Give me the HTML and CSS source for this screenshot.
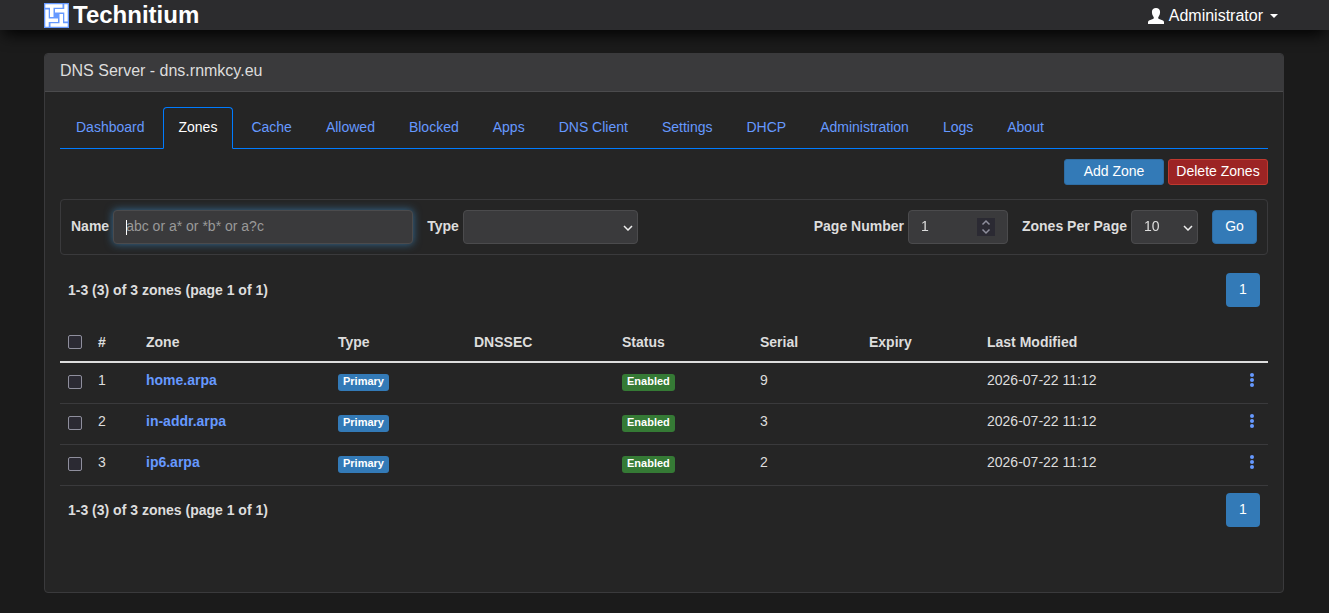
FILE: index.html
```html
<!DOCTYPE html>
<html lang="en">
<head>
  <meta charset="UTF-8" />
  <meta name="viewport" content="width=device-width, initial-scale=1.0"/>
  <title>Technitium DNS Server</title>
  <link rel="stylesheet" href="styles.css">
</head>
<body>
  <header class="header">
    <a class="brand" href="#">
      <svg class="logo" viewBox="0 0 25 25" aria-hidden="true">
        <rect width="25" height="25" fill="#6699ff"/>
        <g fill="#ffffff">
          <path d="M1.300 1.300h17.200v3.400h-9v9.300h-3.500v-9.300h-4.700z"/>
          <path d="M1.300 1.300h17.200v3.400h-9v9.300h-3.500v-9.300h-4.700z" transform="rotate(90 12.500 12.500)"/>
          <path d="M1.300 1.300h17.200v3.400h-9v9.300h-3.500v-9.300h-4.700z" transform="rotate(180 12.500 12.500)"/>
          <path d="M1.300 1.300h17.200v3.400h-9v9.300h-3.500v-9.300h-4.700z" transform="rotate(270 12.500 12.500)"/>
        </g>
      </svg>
      <span>Technitium</span>
    </a>
    <button class="user-menu" type="button">
      <svg class="user-icon" viewBox="0 0 16 16" aria-hidden="true">
        <path fill="currentColor" d="M8 0C5.600 0 3.900 1.500 3.900 4c0 1.600.400 2.900 1.100 3.900.600.900.900 1.500.800 2.100-.100.600-.600.900-1.600 1.300L1 12.600C.300 12.900 0 13.500 0 14.200V16h16v-1.800c0-.700-.300-1.300-1-1.600l-3.200-1.300c-1-.400-1.500-.700-1.600-1.300-.100-.600.200-1.200.800-2.100.700-1 1.100-2.300 1.100-3.900 0-2.500-1.700-4-4.100-4z"/>
      </svg>
      <span>Administrator</span>
      <span class="caret"></span>
    </button>
  </header>

  <main class="container">
    <section class="panel">
      <div class="panel-heading">DNS Server - dns.rnmkcy.eu</div>
      <div class="panel-body">
        <nav class="tabs">
          <a href="#">Dashboard</a>
          <a href="#" class="active">Zones</a>
          <a href="#">Cache</a>
          <a href="#">Allowed</a>
          <a href="#">Blocked</a>
          <a href="#">Apps</a>
          <a href="#">DNS Client</a>
          <a href="#">Settings</a>
          <a href="#">DHCP</a>
          <a href="#">Administration</a>
          <a href="#">Logs</a>
          <a href="#">About</a>
        </nav>

        <div class="actions">
          <button class="btn btn-primary btn-sm" type="button">Add Zone</button>
          <button class="btn btn-danger btn-sm" type="button">Delete Zones</button>
        </div>

        <form class="filter">
          <div class="field">
            <label for="txtName">Name</label>
            <div class="select name">
              <input class="control" id="txtName" type="text" placeholder="abc or a* or *b* or a?c" autofocus />
              <span class="cursor"></span>
            </div>
          </div>
          <div class="field">
            <label for="optType">Type</label>
            <div class="select type">
              <select class="control" id="optType"><option></option><option>Primary</option><option>Secondary</option></select>
              <svg class="chevron" viewBox="0 0 10 6" aria-hidden="true"><path d="M1 1l4 4 4-4"/></svg>
            </div>
          </div>
          <div class="field push">
            <label for="txtPage">Page Number</label>
            <div class="select page">
              <input class="control" id="txtPage" type="number" value="1" min="1" />
              <svg class="spinner" viewBox="0 0 18 18" aria-hidden="true"><path d="M5.500 6.500L9 3l3.500 3.500M5.500 11.500L9 15l3.500-3.500"/></svg>
            </div>
          </div>
          <div class="field">
            <label for="optPerPage">Zones Per Page</label>
            <div class="select per-page">
              <select class="control" id="optPerPage"><option>10</option><option>25</option><option>50</option></select>
              <svg class="chevron" viewBox="0 0 10 6" aria-hidden="true"><path d="M1 1l4 4 4-4"/></svg>
            </div>
          </div>
          <button class="btn btn-primary go" type="button">Go</button>
        </form>

        <div class="pager pager-top">
          <b>1-3 (3) of 3 zones (page 1 of 1)</b>
          <a class="page-link" href="#">1</a>
        </div>

        <table class="zones">
          <colgroup>
            <col class="c-check"><col class="c-num"><col class="c-zone"><col class="c-type"><col class="c-dnssec"><col class="c-status"><col class="c-serial"><col class="c-expiry"><col>
            <col class="c-menu">
          </colgroup>
          <thead>
            <tr>
              <th><input type="checkbox" aria-label="Select all zones" /></th>
              <th>#</th>
              <th>Zone</th>
              <th>Type</th>
              <th>DNSSEC</th>
              <th>Status</th>
              <th>Serial</th>
              <th>Expiry</th>
              <th>Last Modified</th>
              <th></th>
            </tr>
          </thead>
          <tbody>
            <tr>
              <td><input type="checkbox" aria-label="Select home.arpa" /></td>
              <td>1</td>
              <td><a href="#">home.arpa</a></td>
              <td><span class="label label-primary">Primary</span></td>
              <td></td>
              <td><span class="label label-success">Enabled</span></td>
              <td>9</td>
              <td></td>
              <td>2026-07-22 11:12</td>
              <td><button class="menu" type="button" aria-label="Options"><svg viewBox="0 0 4 14"><circle cx="2" cy="2" r="2"/><circle cx="2" cy="7" r="2"/><circle cx="2" cy="12" r="2"/></svg></button></td>
            </tr>
            <tr>
              <td><input type="checkbox" aria-label="Select in-addr.arpa" /></td>
              <td>2</td>
              <td><a href="#">in-addr.arpa</a></td>
              <td><span class="label label-primary">Primary</span></td>
              <td></td>
              <td><span class="label label-success">Enabled</span></td>
              <td>3</td>
              <td></td>
              <td>2026-07-22 11:12</td>
              <td><button class="menu" type="button" aria-label="Options"><svg viewBox="0 0 4 14"><circle cx="2" cy="2" r="2"/><circle cx="2" cy="7" r="2"/><circle cx="2" cy="12" r="2"/></svg></button></td>
            </tr>
            <tr>
              <td><input type="checkbox" aria-label="Select ip6.arpa" /></td>
              <td>3</td>
              <td><a href="#">ip6.arpa</a></td>
              <td><span class="label label-primary">Primary</span></td>
              <td></td>
              <td><span class="label label-success">Enabled</span></td>
              <td>2</td>
              <td></td>
              <td>2026-07-22 11:12</td>
              <td><button class="menu" type="button" aria-label="Options"><svg viewBox="0 0 4 14"><circle cx="2" cy="2" r="2"/><circle cx="2" cy="7" r="2"/><circle cx="2" cy="12" r="2"/></svg></button></td>
            </tr>
          </tbody>
        </table>

        <div class="pager">
          <b>1-3 (3) of 3 zones (page 1 of 1)</b>
          <a class="page-link" href="#">1</a>
        </div>
      </div>
    </section>
  </main>
</body>
</html>
```
FILE: styles.css
```css
* {
  box-sizing: border-box;
}

body {
  margin: 0;
  background: #1b1b1b;
  color: #dddddd;
  font-family: "Liberation Sans", Arial, sans-serif;
  font-size: 14px;
  line-height: 20px;
}

a {
  color: #6699ff;
  text-decoration: none;
}

input, select, button {
  font: inherit;
}

.header {
  display: flex;
  align-items: center;
  justify-content: space-between;
  height: 30px;
  padding: 0 51px 0 44px;
  background: #2c2c2e;
  box-shadow: 0 8px 16px -4px #000000;
}

.brand {
  display: flex;
  align-items: center;
  gap: 4px;
  color: #ffffff;
  font-size: 24px;
  font-weight: bold;
}

.logo {
  width: 25px;
  height: 25px;
}

.user-menu {
  display: flex;
  align-items: center;
  gap: 5px;
  padding: 1px 0 0;
  border: 0;
  background: none;
  color: #ffffff;
  font-size: 16px;
  cursor: pointer;
}

.user-icon {
  width: 16px;
  height: 16px;
}

.caret {
  margin-left: 2px;
  border-top: 4px solid #ffffff;
  border-left: 4px solid transparent;
  border-right: 4px solid transparent;
}

.container {
  padding: 23px 45px 20px 44px;
}

.panel {
  min-height: 540px;
  border: 1px solid #3a3a3c;
  border-radius: 4px;
  background: #252525;
}

.panel-heading {
  height: 38px;
  padding: 7px 15px;
  border-bottom: 1px solid #4b4b4d;
  border-radius: 3px 3px 0 0;
  background: #3a3a3c;
  font-size: 16px;
}

.panel-body {
  padding: 15px;
}

/* tabs */
.tabs {
  display: flex;
  gap: 2px;
  border-bottom: 1px solid #007bff;
}

.tabs a {
  margin-bottom: -1px;
  padding: 9px 15px 11px;
  border: 1px solid transparent;
  border-radius: 4px 4px 0 0;
}

.tabs .active {
  border-color: #007bff;
  border-bottom-color: #252525;
  background: #252525;
  color: #ffffff;
}

/* buttons */
.btn {
  height: 34px;
  padding: 0 12px 2px;
  border: 1px solid transparent;
  border-radius: 4px;
  color: #ffffff;
  cursor: pointer;
}

.btn-sm {
  width: 100px;
  height: 26px;
  padding: 0 0 2px;
  border-radius: 3px;
}

.btn-primary {
  border-color: #2e6da4;
  background: #337ab7;
}

.btn-danger {
  border-color: #c0392f;
  background: #9c2424;
}

.actions {
  display: flex;
  justify-content: flex-end;
  gap: 4px;
  padding: 10px 0 14px;
}

/* filter bar */
.filter {
  display: flex;
  align-items: center;
  gap: 14px;
  padding: 10px;
  border: 1px solid #3a3a3c;
  border-radius: 4px;
}

.field {
  display: flex;
  align-items: center;
  gap: 4px;
}

.field label {
  padding-bottom: 2px;
  font-weight: bold;
}

.push {
  margin-left: auto;
}

.control {
  display: block;
  width: 100%;
  height: 34px;
  padding: 5px 12px 7px;
  border: 1px solid #4b4b4d;
  border-radius: 4px;
  outline: none;
  background: #3a3a3c;
  color: #dddddd;
  appearance: none;
}

.control::placeholder {
  color: #999999;
}

.control:focus {
  box-shadow: 0 0 8px rgba(60, 140, 200, 0.7);
}

.select {
  position: relative;
}

.name {
  width: 300px;
}

.name .control {
  caret-color: transparent;
}

.cursor {
  display: none;
  position: absolute;
  top: 10px;
  left: 13px;
  width: 1px;
  height: 15px;
  background: #ffffff;
}

.control:focus + .cursor {
  display: block;
}

.control:not(:placeholder-shown) + .cursor {
  display: none;
}

.type {
  width: 175px;
}

.page {
  width: 100px;
}

.page .control {
  appearance: textfield;
}

.per-page {
  width: 67px;
}

.chevron,
.spinner {
  position: absolute;
  fill: none;
  pointer-events: none;
}

.chevron {
  top: 15px;
  right: 5px;
  width: 10px;
  height: 6px;
  stroke: #eeeeee;
  stroke-width: 1.5;
}

.spinner {
  top: 8px;
  right: 13px;
  width: 18px;
  height: 18px;
  background: #2b2a33;
  stroke: #8f8f9d;
  stroke-width: 1.5;
}

.go {
  width: 45px;
}

/* pagination */
.pager {
  display: flex;
  align-items: center;
  justify-content: space-between;
  padding: 7px 8px;
}

.pager-top {
  margin: 11px 0 9px;
}

.page-link {
  width: 34px;
  height: 34px;
  padding: 6px 0;
  border-radius: 4px;
  background: #337ab7;
  color: #ffffff;
  text-align: center;
}

/* zones table */
.zones {
  width: 100%;
  border-collapse: separate;
  border-spacing: 0;
  table-layout: fixed;
}

.zones th,
.zones td {
  padding: 8px;
  border-bottom: 1px solid #3a3a3c;
  text-align: left;
}

.zones th {
  height: 40px;
  border-bottom: 2px solid #dddddd;
}

.zones td {
  height: 41px;
  padding-top: 7px;
  vertical-align: top;
}

.zones td a {
  font-weight: bold;
}

.c-check { width: 30px; }
.c-num { width: 48px; }
.c-zone { width: 192px; }
.c-type { width: 136px; }
.c-dnssec { width: 148px; }
.c-status { width: 138px; }
.c-serial { width: 109px; }
.c-expiry { width: 118px; }
.c-menu { width: 40px; }

.zones input {
  display: block;
  width: 14px;
  height: 14px;
  margin: 0;
  border: 1px solid #8f8f9d;
  border-radius: 2px;
  background: #2b2a33;
  appearance: none;
}

.zones td input {
  margin-top: 5px;
}

.label {
  display: block;
  width: fit-content;
  height: 17px;
  margin-top: 4px;
  padding: 0 5px;
  border-radius: 3px;
  color: #ffffff;
  font-size: 11px;
  font-weight: bold;
  line-height: 15px;
}

.label-primary {
  background: #337ab7;
}

.label-success {
  background: #357a35;
}

.menu {
  display: block;
  margin: 3px 6px 0 auto;
  padding: 0;
  border: 0;
  background: none;
  cursor: pointer;
}

.menu svg {
  display: block;
  width: 4px;
  height: 14px;
  fill: #6699ff;
}
```
